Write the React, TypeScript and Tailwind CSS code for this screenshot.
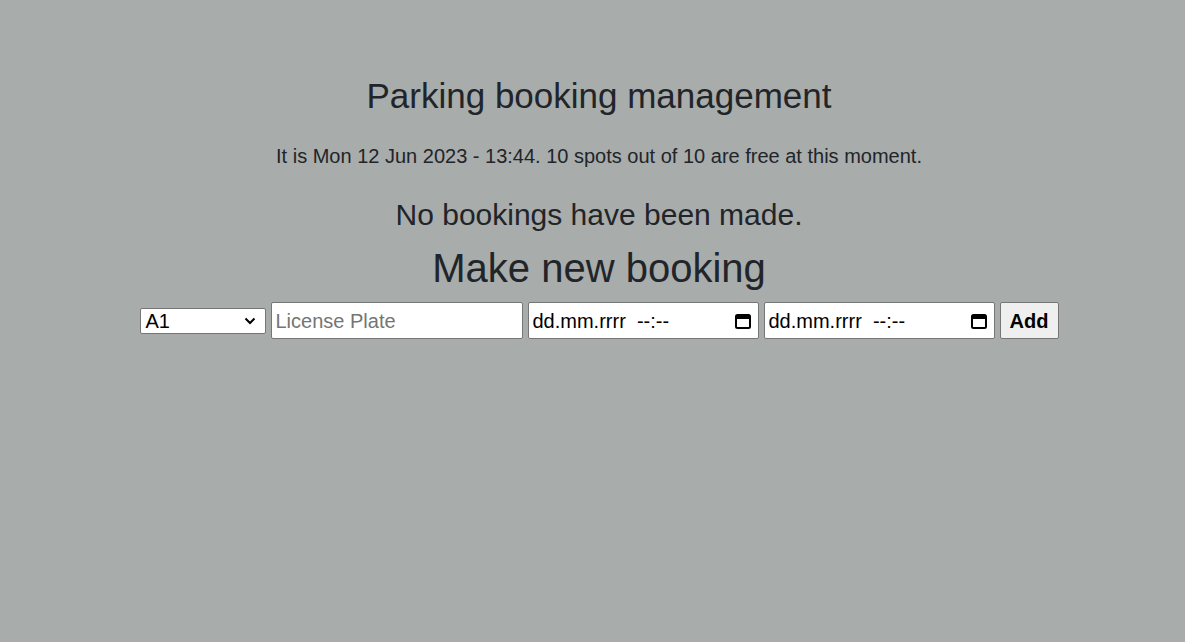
import React from "react";

function CalendarIcon() {
  return (
    <svg width="18" height="18" viewBox="0 0 18 18" fill="none">
      <rect x="2" y="3" width="14" height="13" rx="1.5" stroke="#000" strokeWidth="2" />
      <rect x="2" y="3" width="14" height="4" fill="#000" />
    </svg>
  );
}

function FakeDate() {
  return (
    <div className="flex h-[37px] w-[231px] items-center justify-between rounded-[2px] border border-[#767676] bg-white pl-[4px] pr-[6px] text-[20px] text-black">
      <span>dd.mm.rrrr&nbsp;&nbsp;--:--</span>
      <CalendarIcon />
    </div>
  );
}

export default function App() {
  return (
    <div
      className="min-h-[642px] w-full bg-[#a8acab] text-[#212529]"
      style={{ fontFamily: '"Liberation Sans", Arial, sans-serif' }}
    >
      <div className="flex flex-col items-center pl-[13px] pt-[74px]">
        <h1 className="text-[35px] leading-[44px]">Parking booking management</h1>
        <p className="mt-[25px] text-[20px] leading-[26px]">
          It is Mon 12 Jun 2023 - 13:44. 10 spots out of 10 are free at this moment.
        </p>
        <p className="mt-[28px] text-[30px] leading-[36px]">No bookings have been made.</p>
        <h2 className="mt-[11px] text-[40px] leading-[48px]">Make new booking</h2>
        <div className="mt-[10px] flex items-center gap-[5px]">
          <div className="flex h-[26px] w-[126px] items-center justify-between rounded-[2px] border border-[#767676] bg-white pl-[5px] pr-[9px] text-[20px] text-black">
            <span>A1</span>
            <svg width="12" height="8" viewBox="0 0 12 8">
              <path d="M1.5 1.5 L6 6 L10.5 1.5" stroke="#000" strokeWidth="2" fill="none" />
            </svg>
          </div>
          <div className="flex h-[37px] w-[252px] items-center rounded-[2px] border border-[#767676] bg-white pl-[4px] text-[20px] text-[#757575]">
            License Plate
          </div>
          <FakeDate />
          <FakeDate />
          <button className="h-[37px] w-[59px] rounded-[2px] border border-[#767676] bg-[#efefef] text-[20px] font-bold text-black">
            Add
          </button>
        </div>
      </div>
    </div>
  );
}
